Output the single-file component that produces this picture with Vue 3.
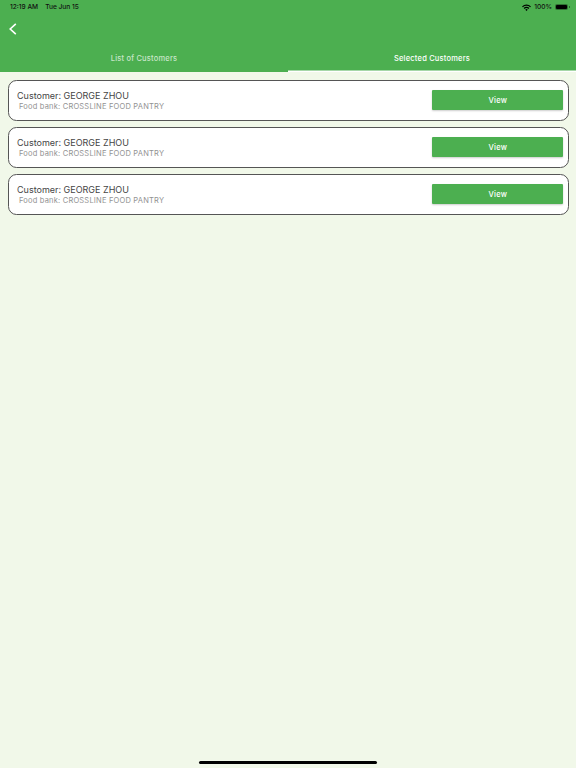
<script setup>
const customers = [1, 2, 3].map((id) => ({
  id,
  name: 'GEORGE ZHOU',
  bank: 'CROSSLINE FOOD PANTRY',
}))
</script>

<template>
  <div class="page">
    <header class="header">
      <div class="status">
        <div class="status-left">
          <span>12:19 AM</span>
          <span>Tue Jun 15</span>
        </div>
        <div class="status-right">
          <svg class="wifi" viewBox="0 0 12 9" width="9" height="7">
            <path d="M0 3 A8.5 8.5 0 0 1 12 3 L10.8 4.3 A6.8 6.8 0 0 0 1.2 4.3 Z" fill="#000" />
            <path d="M2.2 5.2 A5.3 5.3 0 0 1 9.8 5.2 L8.6 6.4 A3.6 3.6 0 0 0 3.4 6.4 Z" fill="#000" />
            <path d="M4.4 7.4 A2.3 2.3 0 0 1 7.6 7.4 L6 9 Z" fill="#000" />
          </svg>
          <span>100%</span>
          <span class="battery"></span>
        </div>
      </div>
      <div class="nav">
        <svg class="back" viewBox="0 0 8 12" width="8" height="12">
          <path d="M6.8 0.8 L1.2 6 L6.8 11.2" fill="none" stroke="#fff" stroke-width="1.6" />
        </svg>
      </div>
      <div class="tabs">
        <div class="tab">List of Customers</div>
        <div class="tab active">Selected Customers</div>
      </div>
    </header>

    <main class="list">
      <div v-for="c in customers" :key="c.id" class="card">
        <div class="info">
          <div class="name">Customer: {{ c.name }}</div>
          <div class="bank">Food bank: {{ c.bank }}</div>
        </div>
        <button class="view">View</button>
      </div>
    </main>

    <div class="home-wrap"><div class="home"></div></div>
  </div>
</template>

<style scoped>
.page {
  width: 576px;
  height: 768px;
  background: #f1f8e9;
  display: flex;
  flex-direction: column;
  font-family: Inter, "Liberation Sans", sans-serif;
  overflow: hidden;
}
.header {
  background: #4caf50;
  height: 72px;
  display: flex;
  flex-direction: column;
  flex: none;
}
.status {
  height: 14px;
  display: flex;
  justify-content: space-between;
  align-items: center;
  padding: 0 9px 0 10px;
  font-size: 6.6px;
  color: #111;
  font-weight: 500;
}
.status-left {
  display: flex;
  gap: 7px;
}
.status-right {
  display: flex;
  align-items: center;
  gap: 2px;
}
.wifi {
  margin-right: 1px;
}
.battery {
  position: relative;
  width: 11px;
  height: 4px;
  border-radius: 1px;
  background: #000;
  display: block;
  margin-left: 2px;
  box-shadow: 0 0 0 1px rgba(0, 0, 0, 0.35);
}
.battery::after {
  content: "";
  position: absolute;
  right: -2.5px;
  top: 1px;
  width: 1px;
  height: 2px;
  background: rgba(0, 0, 0, 0.4);
}
.nav {
  height: 30px;
  display: flex;
  align-items: center;
  padding-left: 9px;
}
.back {
  display: block;
}
.tabs {
  flex: 1;
  display: flex;
}
.tab {
  flex: 1;
  display: flex;
  align-items: center;
  justify-content: center;
  color: rgba(255, 255, 255, 0.7);
  font-size: 7.5px;
  font-weight: 500;
  letter-spacing: 0.2px;
}
.tab.active {
  color: #fff;
  box-shadow: inset 0 -1.5px 0 #fff;
}
.list {
  display: flex;
  flex-direction: column;
  gap: 5.7px;
  padding: 8px 7.5px 0;
}
.card {
  height: 41.3px;
  box-sizing: border-box;
  background: #fff;
  border: 1px solid #555;
  border-radius: 8.5px;
  display: flex;
  align-items: center;
  justify-content: space-between;
  padding: 0 4.2px 0 8.5px;
}
.info {
  padding-top: 1px;
}
.name {
  font-size: 9px;
  color: #444;
  line-height: 12px;
}
.bank {
  font-size: 7.5px;
  color: #929292;
  letter-spacing: 0.2px;
  line-height: 11px;
  margin-top: -1px;
  margin-left: 2px;
}
.view {
  width: 131px;
  height: 20px;
  margin-bottom: 1px;
  border: none;
  border-radius: 1px;
  background: #4caf50;
  color: #fff;
  font-family: inherit;
  font-size: 7.5px;
  font-weight: 500;
  letter-spacing: 0.2px;
  box-shadow: 0 1px 2px rgba(0, 0, 0, 0.2);
  padding: 0;
}
.home-wrap {
  margin-top: auto;
  display: flex;
  justify-content: center;
  padding-bottom: 4px;
}
.home {
  width: 178px;
  height: 3px;
  border-radius: 2px;
  background: #000;
}
</style>
